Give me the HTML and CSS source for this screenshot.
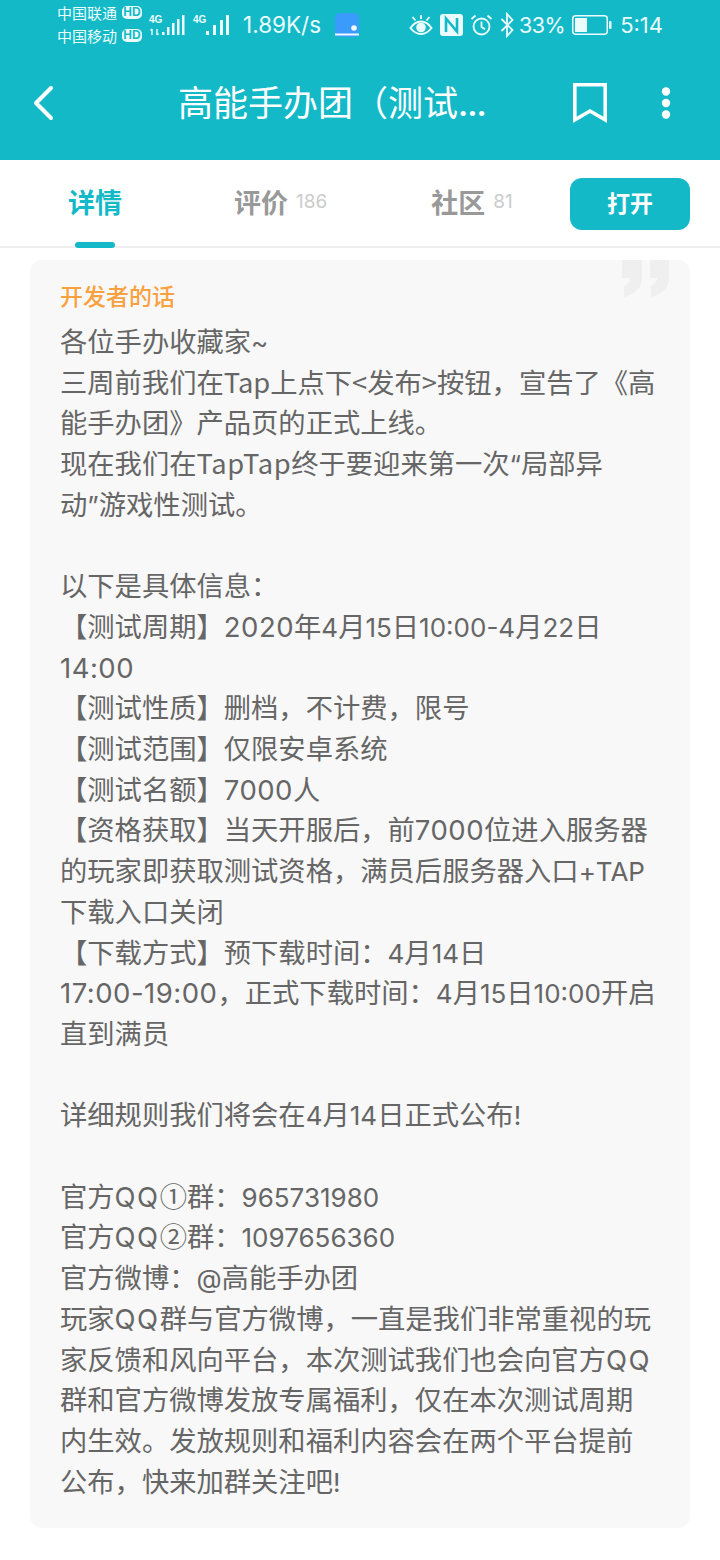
FILE: index.html
```html
<!DOCTYPE html>
<html lang="zh-CN">
<head>
<meta charset="utf-8">
<title>高能手办团</title>
<link rel="stylesheet" href="styles.css">
</head>
<body>
<header class="top">
  <div class="status">
    <div class="carriers">
      <div class="carrier"><span>中国联通</span><span class="hd">HD</span></div>
      <div class="carrier"><span>中国移动</span><span class="hd">HD</span></div>
    </div>
    <svg class="signal" width="36" height="24" viewBox="0 0 36 24"><text x="0" y="10" class="sig-t">4G</text><path d="M3 16v6M1.500 17.500L3 16M8 16v6M8 22l1.500-1.500" fill="none" stroke="#eafcfd" stroke-width="1.400"/><g fill="#eafcfd"><rect x="13" y="19" width="2.500" height="3"/><rect x="18" y="14" width="2.500" height="8"/><rect x="23" y="10" width="2.500" height="12"/><rect x="28" y="6" width="2.500" height="16"/><rect x="33" y="2" width="2.500" height="20"/></g></svg>
    <svg class="signal2" width="36" height="24" viewBox="0 0 36 24"><text x="0" y="10" class="sig-t">4G</text><g fill="#eafcfd"><rect x="13" y="18" width="3" height="4"/><rect x="20" y="12" width="3" height="10"/><rect x="27" y="7" width="3" height="15"/><rect x="33" y="2" width="3" height="20"/></g></svg>
    <span class="speed">1.89K/s</span>
    <svg class="appicon" width="24" height="24" viewBox="0 0 24 24"><rect width="24" height="24" rx="5" fill="#3a9bfd"/><path d="M0 20.500h24v1.500q0 .5-.5 .5H.5q-.5 0-.5-.5z" fill="#f2faff"/><circle cx="19" cy="15" r="2.800" fill="#f2faff"/></svg>
    <div class="status-right">
      <svg width="24" height="22" viewBox="0 0 24 22" fill="none" stroke="#eafcfd" stroke-width="2"><path d="M1.500 14c3-4.500 6.500-6.500 10.500-6.500s7.500 2 10.500 6.500c-3 4-6.500 6-10.500 6s-7.500-2-10.500-6z"/><circle cx="12" cy="13.500" r="3.800" fill="#eafcfd"/><path d="M3.500 3l3 3.500M20.500 3l-3 3.500M12 1v4" stroke-width="1.800"/></svg>
      <svg width="23" height="22" viewBox="0 0 23 22"><rect width="23" height="22" rx="3" fill="#eafcfd"/><path d="M6 18V4.500l11 13V4" fill="none" stroke="#14b9c8" stroke-width="2.600"/></svg>
      <svg width="23" height="22" viewBox="0 0 23 22" fill="none" stroke="#eafcfd" stroke-width="1.800"><circle cx="11.500" cy="12.500" r="8"/><path d="M11.500 7.500v5.500l3.500 2.200M1.500 5l4-3.500M21.500 5l-4-3.500"/></svg>
      <svg class="bt" width="14" height="26" viewBox="0 0 14 26" fill="none" stroke="#eafcfd" stroke-width="1.800"><path d="M1.500 7l11 11-5.500 6V2l5.500 6-11 11"/></svg>
      <span class="pct">33%</span>
      <svg class="batt" width="40" height="20" viewBox="0 0 40 20"><rect x="0.750" y="0.750" width="34.500" height="18.500" rx="3" fill="none" stroke="#eafcfd" stroke-width="1.500"/><rect x="3" y="3" width="12" height="14" fill="#eafcfd"/><rect x="37" y="6" width="2.500" height="8" rx="1" fill="#eafcfd"/></svg>
      <span class="time">5:14</span>
    </div>
  </div>
  <nav class="titlebar">
    <svg class="back" width="24" height="36" viewBox="0 0 24 36" fill="none" stroke="#fff" stroke-width="4" stroke-linecap="round" stroke-linejoin="round"><path d="M19 3L4 18l15 15"/></svg>
    <h1 class="title">高能手办团（测试<span class="dots">...</span></h1>
    <svg class="mark" width="34" height="40" viewBox="0 0 34 40" fill="none" stroke="#fff" stroke-width="3.600"><path d="M1.800 1.800h30.400v35L17 28 1.800 36.800z"/></svg>
    <svg class="more" width="10" height="32" viewBox="0 0 10 32" fill="#fff"><circle cx="5" cy="4.500" r="4.200"/><circle cx="5" cy="16" r="4.200"/><circle cx="5" cy="27.500" r="4.200"/></svg>
  </nav>
</header>
<div class="tabs">
  <div class="tab tab-active">详情<i class="bar"></i></div>
  <div class="tab tab-rate">评价<small>186</small></div>
  <div class="tab tab-comm">社区<small>81</small></div>
  <button class="open">打开</button>
</div>
<main class="card">
  <svg class="quote" width="47" height="38" viewBox="0 0 47 38" fill="#efefef"><path d="M0 0h20v18c0 10-8 17-18 19V26c3-1 6-4 6-8H0zM28 0h19v18c0 10-8 17-18 19V26c3-1 6-4 6-8h-7z"/></svg>
  <h2 class="label">开发者的话</h2>
  <p class="body">各位手办收藏家<span class="n">~</span>
三周前我们在Tap上点下&lt;发布&gt;按钮，宣告了《高
能手办团》产品页的正式上线。
现在我们在<span class="tt">TapTap</span>终于要迎来第一次<span class="n">“</span>局部异
动<span class="n">”</span>游戏性测试。

以下是具体信息：
【测试周期】<span class="w">2020</span>年<span class="n">4</span>月<span class="n">15</span>日<span class="n">10:00-4</span>月<span class="n">22</span>日
<span class="w">14:00</span>
【测试性质】删档，不计费，限号
【测试范围】仅限安卓系统
【测试名额】<span class="w">7000</span>人
【资格获取】当天开服后，前<span class="w">7000</span>位进入服务器
的玩家即获取测试资格，满员后服务器入口<span class="n">+TAP</span>
下载入口关闭
【下载方式】预下载时间：<span class="n">4</span>月<span class="n">14</span>日
<span class="w">17:00-19:00</span>，正式下载时间：<span class="n">4</span>月<span class="n">15</span>日<span class="n">10:00</span>开启
直到满员

详细规则我们将会在<span class="n">4</span>月<span class="n">14</span>日正式公布<span class="n">!</span>

官方<span class="q">QQ</span>①群：<span class="n">965731980</span>
官方<span class="q">QQ</span>②群：<span class="n">1097656360</span>
官方微博：<span class="n">@</span>高能手办团
玩家<span class="q">QQ</span>群与官方微博，一直是我们非常重视的玩
家反馈和风向平台，本次测试我们也会向官方<span class="q">QQ</span>
群和官方微博发放专属福利，仅在本次测试周期
内生效。发放规则和福利内容会在两个平台提前
公布，快来加群关注吧<span class="n">!</span></p>
</main>
</body>
</html>
```
FILE: styles.css
```css
* { box-sizing: border-box; }
html, body { margin: 0; padding: 0; }
body {
  width: 720px;
  height: 1560px;
  overflow: hidden;
  background: #fff;
  font-family: "Noto Sans CJK SC", Inter, sans-serif;
}
.top { height: 160px; background: #14b9c8; color: #fff; }
.status { height: 50px; display: flex; align-items: center; padding-left: 57px; color: #eafcfd; }
.carriers { display: flex; flex-direction: column; width: 86px; gap: 3px; margin-top: -2px; }
.carrier { display: flex; align-items: center; gap: 5px; font-size: 15px; line-height: 20px; white-space: nowrap; }
.hd { width: 20px; text-align: center; font: 700 12px/13px "Liberation Sans", sans-serif; background: #eafcfd; color: #14b9c8; border-radius: 5px; }
.sig-t { font: 700 10px "Liberation Sans", sans-serif; fill: #eafcfd; }
.signal { margin-left: 6px; }
.signal2 { margin-left: 8px; }
.speed { font: 400 22.500px/26px Inter, sans-serif; margin-left: 14px; white-space: nowrap; }
.appicon { margin-left: 14px; }
.status-right { margin-left: auto; padding-right: 57px; display: flex; align-items: center; gap: 7px; }
.pct, .time { font: 400 21.500px/26px Inter, sans-serif; white-space: nowrap; }
.pct { margin-left: -2px; letter-spacing: -0.500px; }
.time { margin-left: 1px; font-size: 22px; }
.titlebar { height: 110px; display: flex; align-items: center; padding: 0 49px 4px 32px; }
.title { flex: 1; margin: 0 0 0 122px; font-size: 35px; font-weight: 400; line-height: 48px; white-space: nowrap; }
.dots { font-family: Inter, sans-serif; font-size: 32px; font-weight: 600; letter-spacing: -1px; }
.mark { margin-right: 54px; }
.tabs { position: relative; height: 88px; display: flex; align-items: center; border-bottom: 2px solid #eee; }
.tab { margin-bottom: 2px; font-size: 27px; font-weight: 700; line-height: 40px; color: #999; white-space: nowrap; display: flex; align-items: center; }
.tab small { font: 400 19px/28px Inter, sans-serif; color: #ccc; margin-left: 8px; }
.tab-active { color: #14b9c8; margin-left: 68px; position: relative; }
.tab-rate { margin-left: 112px; }
.tab-comm { margin-left: 104px; }
.bar { position: absolute; left: 7px; bottom: -26px; width: 40px; height: 6px; border-radius: 3px; background: #14b9c8; }
.open { margin: 2px 30px 0 auto; padding: 0 0 4px; width: 120px; height: 52px; border: 0; border-radius: 12px; background: #14b9c8; color: #fff; font: 700 23px "Noto Sans CJK SC", sans-serif; }
.card { position: relative; margin: 12px 30px 0; height: 1268px; padding: 17px 20px 0 30px; background: #f8f8f8; border-radius: 12px; }
.quote { position: absolute; right: 21px; top: 0; }
.label { margin: 0; font-size: 23px; font-weight: 500; line-height: 36px; color: #f8a13f; }
.body { margin: 7px 0 0; font-size: 27.300px; line-height: 40.700px; color: #666; white-space: pre; }
.n, .w, .q, .tt { line-height: 0; }
.n { font-family: Inter, sans-serif; font-size: 26px; }
.w { font-family: Inter, sans-serif; font-size: 27.500px; letter-spacing: 0.500px; }
.q { font-family: Inter, sans-serif; font-size: 27.500px; letter-spacing: 1.500px; }
.tt { letter-spacing: 0.600px; }
```
